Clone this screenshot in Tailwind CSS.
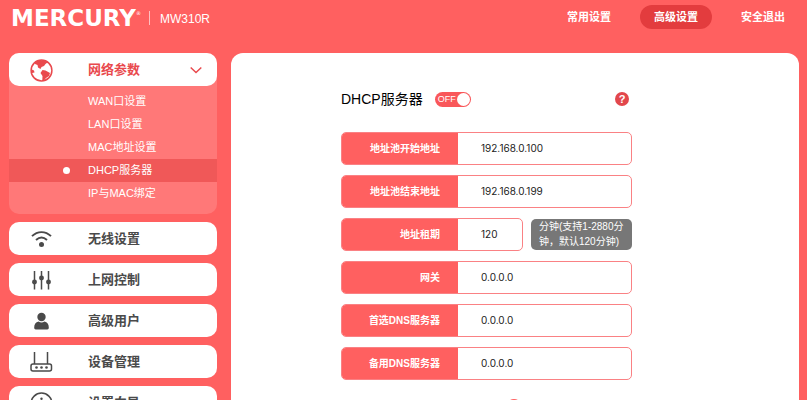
<!DOCTYPE html>
<html lang="zh-CN">
<head>
  <meta charset="UTF-8" />
  <meta name="viewport" content="width=device-width, initial-scale=1.0"/>
  <title>MERCURY MW310R</title>
  <script src="https://cdn.jsdelivr.net/npm/@tailwindcss/browser@4"></script>
</head>
<body class="flex h-screen flex-col overflow-hidden bg-[#ff6060] font-['Liberation_Sans','Noto_Sans_CJK_SC',sans-serif] text-[11px] text-white">

  <!-- HEADER -->
  <header class="flex h-[53px] shrink-0 items-start justify-between pt-[5px] pr-2 pl-[11px]">
    <div class="flex h-[26px] items-center">
      <h1 class="flex items-start font-['DejaVu_Sans',sans-serif] text-[23px] leading-6 font-bold">MERCURY<span class="text-[5px] leading-[14px] font-normal">®</span></h1>
      <span class="ml-2 h-[14px] w-px bg-white/60"></span>
      <span class="ml-[10px] pt-[2px] text-[12px] leading-4">MW310R</span>
    </div>
    <nav class="flex gap-[15px] font-bold">
      <a href="#" class="flex h-6 items-center rounded-full px-[14px]">常用设置</a>
      <a href="#" class="flex h-6 items-center rounded-full bg-[#e33c3e] px-[14px]">高级设置</a>
      <a href="#" class="flex h-6 items-center rounded-full px-[14px]">安全退出</a>
    </nav>
  </header>

  <div class="flex min-h-0 flex-1 gap-[14px] pr-2 pl-[9px]">

    <!-- SIDEBAR -->
    <aside class="flex w-[208px] shrink-0 flex-col gap-2 text-[13px] font-bold text-[#4a4a4a]">
      <div class="shrink-0 rounded-[10px] bg-[#ff7878] pb-[9px]">
        <button class="flex h-[33px] w-full items-center rounded-[10px] bg-white pr-[15px] pl-5 text-[#e9494d]">
          <svg class="size-6" viewBox="0 0 24 24" fill="none" stroke="currentColor" stroke-width="1.5">
            <circle cx="12.5" cy="12.5" r="10.4"/>
            <path fill="currentColor" stroke="none" d="M6 4l4-2 6 .5 2.500 2-2 1.500-1.500 2-2.500 1-1 2-2.500-1.500-.5-2.500L6 6z M13.500 12l3 .5 4.500 2.500-1 3-3 2-2.500 3-1.200-.5.2-4.500-2-3z M2 11l3 1.500.5 2L3 15z"/>
          </svg>
          <span class="ml-[35px]">网络参数</span>
          <svg class="ml-auto h-2 w-3" viewBox="0 0 12 8" fill="none" stroke="currentColor" stroke-width="1.500"><path d="M.7 1.500l5.300 5 5.300-5"/></svg>
        </button>
        <ul class="pt-1 text-[11px] leading-[23px] font-normal text-white">
          <li><a href="#" class="block pl-[79px]">WAN口设置</a></li>
          <li><a href="#" class="block pl-[79px]">LAN口设置</a></li>
          <li><a href="#" class="block pl-[79px]">MAC地址设置</a></li>
          <li>
            <a href="#" class="flex items-center bg-[#f05858] pl-[54px]">
              <span class="mr-[18px] size-[7px] rounded-full bg-white"></span>DHCP服务器
            </a>
          </li>
          <li><a href="#" class="block pl-[79px]">IP与MAC绑定</a></li>
        </ul>
      </div>

      <button class="flex h-[33px] shrink-0 items-center rounded-[10px] bg-white pl-5">
        <svg class="size-6" viewBox="0 0 24 24" fill="none" stroke="currentColor" stroke-width="1.900">
          <path d="M3 9.200c5.500-5.500 13.500-5.500 19 0M7 13c3.500-3.300 7.500-3.300 11 0"/>
          <circle cx="12.500" cy="17.500" r="2.500" fill="currentColor" stroke="none"/>
        </svg>
        <span class="ml-[35px]">无线设置</span>
      </button>
      <button class="flex h-[33px] shrink-0 items-center rounded-[10px] bg-white pl-5">
        <svg class="size-6" viewBox="0 0 24 24" fill="currentColor" stroke="currentColor" stroke-width="1.500">
          <path d="M5.500 3v18.500M12.500 3v18.500M19.500 3v18.500"/>
          <circle cx="5.500" cy="14" r="1.700"/>
          <circle cx="12.500" cy="10" r="1.700"/>
          <circle cx="19.500" cy="14" r="1.700"/>
        </svg>
        <span class="ml-[35px]">上网控制</span>
      </button>
      <button class="flex h-[33px] shrink-0 items-center rounded-[10px] bg-white pl-5">
        <svg class="size-6" viewBox="0 0 24 24" fill="currentColor">
          <circle cx="12.500" cy="8" r="4.200"/>
          <path d="M5.200 18.500c0-3.500 1.500-5.500 4.300-6 2 1.200 4 1.200 6 0 2.800.5 4.300 2.500 4.300 6 0 1.300-.5 2-1.500 2H6.700c-1 0-1.500-.7-1.500-2z"/>
        </svg>
        <span class="ml-[35px]">高级用户</span>
      </button>
      <button class="flex h-[33px] shrink-0 items-center rounded-[10px] bg-white pl-5">
        <svg class="size-6" viewBox="0 0 24 24" fill="none" stroke="currentColor" stroke-width="1.500">
          <path d="M5.500 2v12M18.500 2v12"/>
          <rect x="2" y="14" width="20.500" height="7" rx="2"/>
          <g fill="currentColor" stroke="none"><circle cx="7.500" cy="17.500" r="1.300"/><circle cx="12.500" cy="17.500" r="1.300"/><circle cx="17.500" cy="17.500" r="1.300"/></g>
        </svg>
        <span class="ml-[35px]">设备管理</span>
      </button>
      <button class="flex h-[33px] shrink-0 items-center rounded-[10px] bg-white pl-5">
        <svg class="size-6" viewBox="0 0 24 24" fill="none" stroke="currentColor" stroke-width="1.500">
          <circle cx="12.500" cy="12.500" r="10.400"/>
          <path d="M12.500 11v7"/><circle cx="12.500" cy="7.800" r="1.200" fill="currentColor" stroke="none"/>
        </svg>
        <span class="ml-[35px]">设置向导</span>
      </button>
    </aside>

    <!-- DHCP -->
    <main class="flex-1 rounded-t-[12px] bg-white pt-9 pl-[110px]">
      <form class="w-full max-w-[291px]">
        <div class="mb-[23px] flex h-5 items-center text-black">
          <h2 class="text-[14px]">DHCP服务器</h2>
          <button type="button" role="switch" aria-checked="false" class="ml-3 flex h-[15px] w-9 items-center justify-between rounded-full bg-[#f9575a] pr-px pl-[3px] text-[9px] leading-none text-white">
            OFF<span class="size-[13px] rounded-full bg-white"></span>
          </button>
          <button type="button" class="mr-[3px] ml-auto flex size-[14px] items-center justify-center rounded-full bg-[#e2474c] text-[11px] leading-none font-bold text-white" aria-label="帮助">?</button>
        </div>

        <div class="flex flex-col gap-[10px] text-[10px]">
          <div class="flex h-[33px] overflow-hidden rounded-[5px] border border-[#fa8184]">
            <label for="pool-start" class="flex w-[116px] shrink-0 items-center justify-end bg-[#ff6060] pr-[18px] font-bold">地址池开始地址</label>
            <input id="pool-start" type="text" value="192.168.0.100" class="w-full min-w-0 pl-[23px] font-['Inter',sans-serif] text-[#222]" />
          </div>
          <div class="flex h-[33px] overflow-hidden rounded-[5px] border border-[#fa8184]">
            <label for="pool-end" class="flex w-[116px] shrink-0 items-center justify-end bg-[#ff6060] pr-[18px] font-bold">地址池结束地址</label>
            <input id="pool-end" type="text" value="192.168.0.199" class="w-full min-w-0 pl-[23px] font-['Inter',sans-serif] text-[#222]" />
          </div>
          <div class="flex gap-2">
            <div class="flex h-[33px] flex-1 overflow-hidden rounded-[5px] border border-[#fa8184]">
              <label for="lease" class="flex w-[116px] shrink-0 items-center justify-end bg-[#ff6060] pr-[18px] font-bold">地址租期</label>
              <input id="lease" type="text" value="120" class="w-full min-w-0 pl-[23px] font-['Inter',sans-serif] text-[#222]" />
            </div>
            <p class="my-px w-[101px] rounded-[5px] bg-[#777] pl-2 leading-[15px]">分钟(支持1-2880分<br>钟，默认120分钟)</p>
          </div>
          <div class="flex h-[33px] overflow-hidden rounded-[5px] border border-[#fa8184]">
            <label for="gateway" class="flex w-[116px] shrink-0 items-center justify-end bg-[#ff6060] pr-[18px] font-bold">网关</label>
            <input id="gateway" type="text" value="0.0.0.0" class="w-full min-w-0 pl-[23px] font-['Inter',sans-serif] text-[#222]" />
          </div>
          <div class="flex h-[33px] overflow-hidden rounded-[5px] border border-[#fa8184]">
            <label for="dns1" class="flex w-[116px] shrink-0 items-center justify-end bg-[#ff6060] pr-[18px] font-bold">首选DNS服务器</label>
            <input id="dns1" type="text" value="0.0.0.0" class="w-full min-w-0 pl-[23px] font-['Inter',sans-serif] text-[#222]" />
          </div>
          <div class="flex h-[33px] overflow-hidden rounded-[5px] border border-[#fa8184]">
            <label for="dns2" class="flex w-[116px] shrink-0 items-center justify-end bg-[#ff6060] pr-[18px] font-bold">备用DNS服务器</label>
            <input id="dns2" type="text" value="0.0.0.0" class="w-full min-w-0 pl-[23px] font-['Inter',sans-serif] text-[#222]" />
          </div>
        </div>
        <div class="mt-[19px] ml-[165px] size-4 rounded-full bg-[#ff6060]"></div>
      </form>
    </main>
  </div>
</body>
</html>
